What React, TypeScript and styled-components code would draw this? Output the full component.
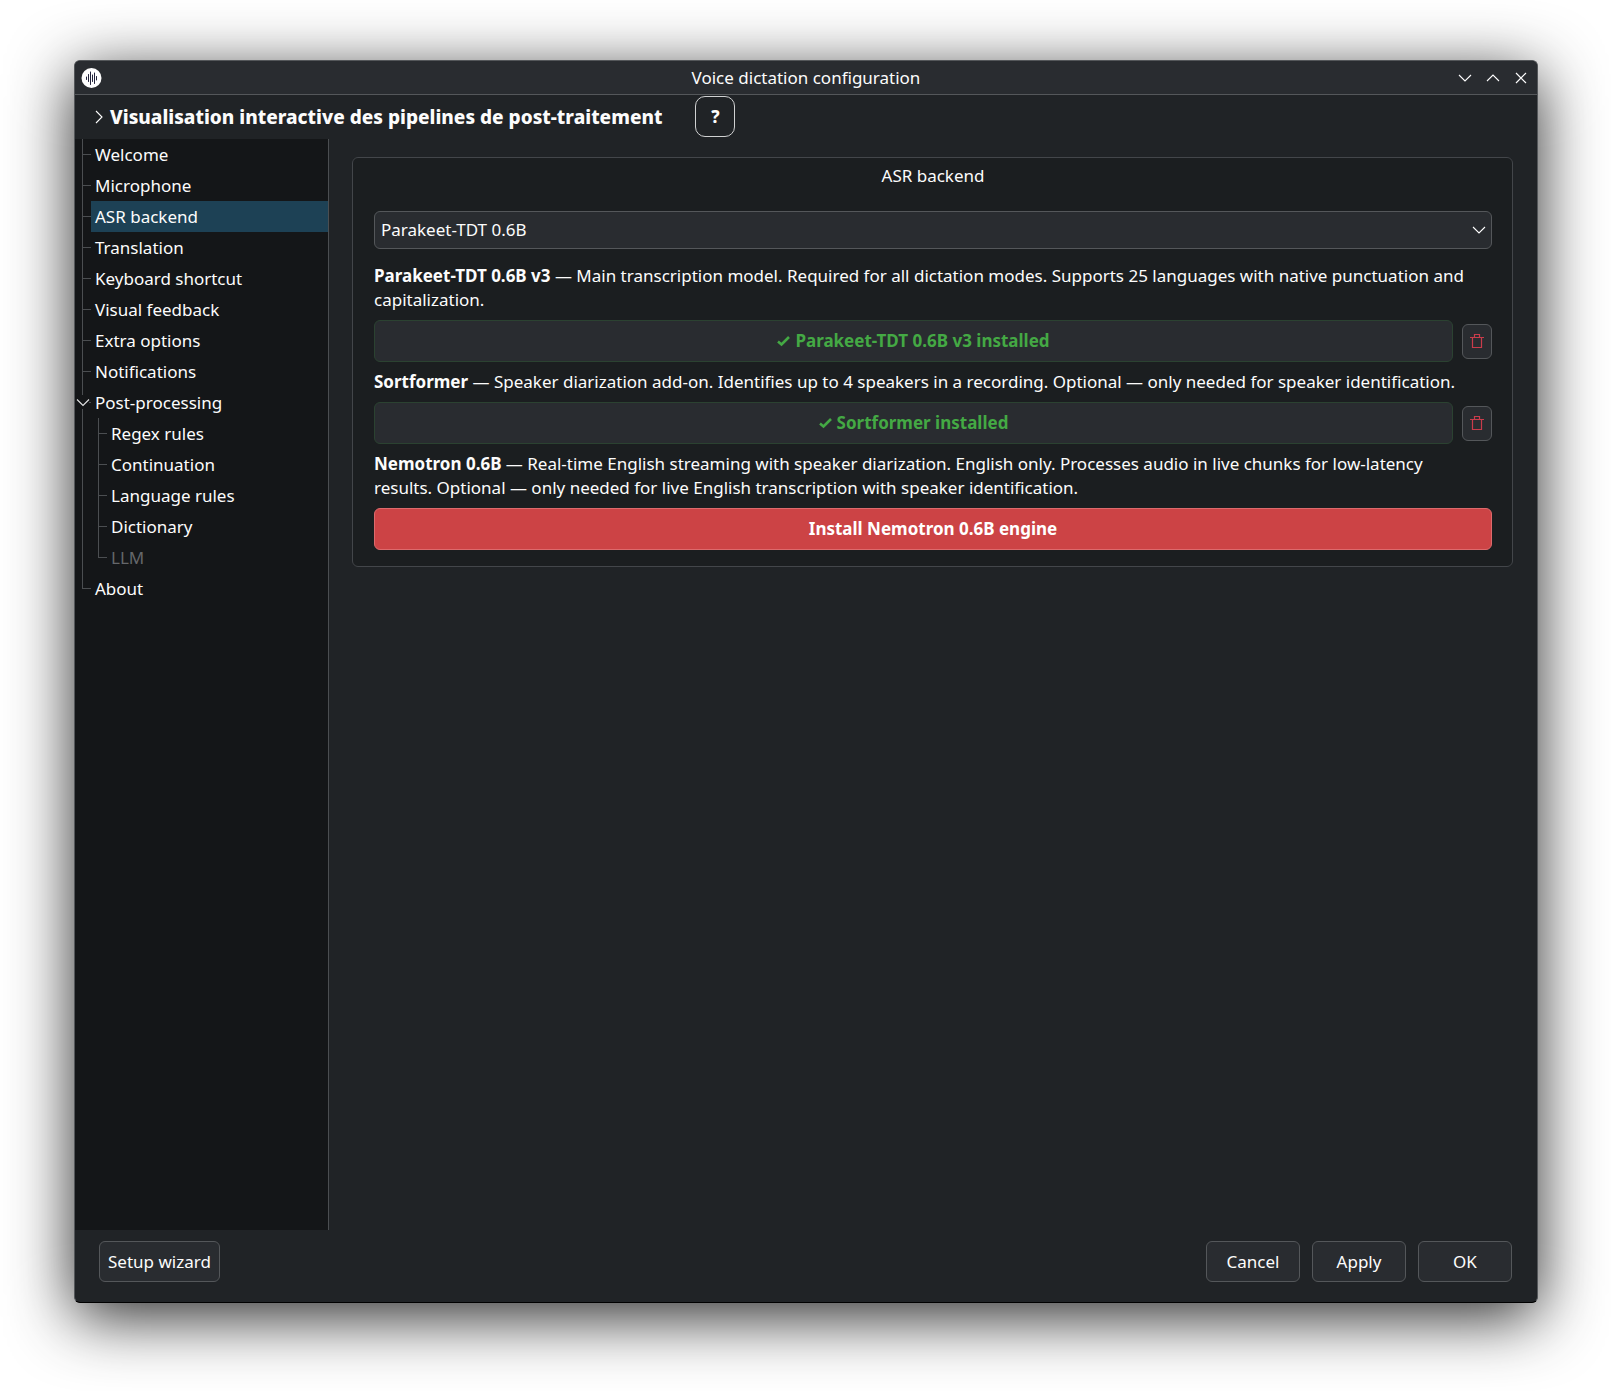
import React, { useState } from "react";
import styled, { createGlobalStyle, css } from "styled-components";

const GlobalStyle = createGlobalStyle`
  * { box-sizing: border-box; }
  body { margin: 0; background: #fff; }
  body, button, select { font-family: "Noto Sans", "Open Sans", sans-serif; font-size: 17px; line-height: 24px; color: #fcfcfc; }
`;

const Desktop = styled.div`
  display: flex;
  min-height: 100vh;
  padding: 60px 73px 88px 74px;
`;

const Window = styled.main`
  flex: 1;
  min-width: 0;
  display: flex;
  flex-direction: column;
  background: #202326;
  border: 1px solid #54575a;
  border-bottom-color: #000;
  border-radius: 6px;
  overflow: hidden;
  box-shadow: 0 14px 64px rgba(0, 0, 0, 0.84);
`;

const TitleBar = styled.header`
  display: grid;
  grid-template-columns: 1fr auto 1fr;
  align-items: center;
  height: 34px;
  padding: 0 6px;
  background: #292c30;
  border-bottom: 1px solid #54575a;
`;

const WindowTitle = styled.span`
  color: #fcfcfc;
`;

const WindowControls = styled.div`
  display: flex;
  justify-content: flex-end;
  gap: 8px;
`;

const IconButton = styled.button`
  display: flex;
  align-items: center;
  justify-content: center;
  width: 20px;
  height: 20px;
  padding: 0;
  border: 0;
  background: none;
`;

const HeaderRow = styled.div`
  display: flex;
  align-items: center;
  height: 44px;
  padding: 0 0 1px 17px;
`;

const Disclosure = styled.button`
  display: flex;
  align-items: center;
  gap: 4px;
  padding: 0;
  border: 0;
  background: none;
  font-size: 19px;
  font-weight: 800;
  white-space: nowrap;
`;

const HelpButton = styled.button`
  width: 40px;
  height: 41px;
  margin-left: 33px;
  padding: 0;
  border: 1px solid #d0d1d2;
  border-radius: 10px;
  background: none;
  font-weight: 800;
`;

const Body = styled.div`
  flex: 1;
  display: flex;
`;

const Sidebar = styled.nav`
  width: 254px;
  flex: none;
  background: #141618;
  border-right: 1px solid #4b4e51;
`;

const TreeList = styled.ul`
  margin: 0;
  padding: 0;
  list-style: none;
`;

const TreeRow = styled.li`
  display: flex;
  height: 31px;
`;

const TreeButton = styled.button<{ $selected: boolean }>`
  flex: 1;
  padding: 0 0 0 4px;
  border: 0;
  background: ${(p) => (p.$selected ? "#1d4155" : "none")};
  text-align: left;
  &:disabled { color: #65676a; }
`;

const Guide = styled.svg`
  display: block;
  flex: none;
  width: 16px;
  height: 31px;
  fill: none;
  stroke: #4b4e51;
`;

const Content = styled.section`
  flex: 1;
  min-width: 0;
  padding: 18px 24px 18px 23px;
`;

const Group = styled.fieldset`
  display: flex;
  flex-direction: column;
  gap: 8px;
  min-width: 0;
  margin: 0;
  padding: 6px 20px 16px 21px;
  border: 1px solid #43464a;
  border-radius: 6px;
  background: #1b1e20;
`;

const GroupTitle = styled.div`
  margin-bottom: 15px;
  text-align: center;
`;

const SelectWrap = styled.div`
  display: grid;
  align-items: center;
  margin-bottom: 7px;
  & > * { grid-area: 1 / 1; }
  & > svg { justify-self: end; margin-right: 6px; pointer-events: none; }
`;

const frame = css`
  border: 1px solid #54575a;
  border-radius: 6px;
  background: #292c30;
`;

const Select = styled.select`
  ${frame}
  appearance: none;
  width: 100%;
  height: 38px;
  padding: 0 30px 0 6px;
`;

const Description = styled.p`
  margin: 0;
  padding-right: 8px;
`;

const EngineRow = styled.div`
  display: flex;
  align-items: center;
  gap: 9px;
`;

const EngineButton = styled.button<{ $kind: "installed" | "install" }>`
  ${frame}
  flex: 1;
  height: 42px;
  display: flex;
  align-items: center;
  justify-content: center;
  gap: 5px;
  font-weight: 700;
  ${(p) =>
    p.$kind === "installed"
      ? css`border-color: #2b4231; color: #44a944;`
      : css`border-color: #dd6a6c; background: #cc4345; color: #fff;`}
`;

const TrashButton = styled.button`
  ${frame}
  display: flex;
  align-items: center;
  justify-content: center;
  width: 30px;
  height: 35px;
  padding: 0;
`;

const Footer = styled.footer`
  display: flex;
  gap: 12px;
  height: 72px;
  padding: 11px 25px 20px 24px;
`;

const DialogButton = styled.button<{ $first?: boolean }>`
  ${frame}
  min-width: 94px;
  padding: 0 8px;
  margin-right: ${(p) => (p.$first ? "auto" : "0")};
`;

type GuideKind = "tee" | "end" | "pass" | "open";

const guidePaths: Record<GuideKind, string> = {
  tee: "M7.5 0V31M8 15.5H16",
  end: "M7.5 0V16M8 15.5H16",
  pass: "M7.5 0V31",
  open: "M7.5 0V8M7.5 22V31M14 15.5H16",
};

function TreeGuide({ kind }: { kind: GuideKind }) {
  return (
    <Guide viewBox="0 0 16 31" aria-hidden="true">
      <path d={guidePaths[kind]} />
      {kind === "open" && <path d="M2 12.5L8 18.5L14 12.5" stroke="#e4e5e6" strokeWidth="1.1" />}
    </Guide>
  );
}

function Chevron({ dir, color = "#fcfcfc" }: { dir: "down" | "up" | "right"; color?: string }) {
  const d = { down: "M1 4L7 10L13 4", up: "M1 10L7 4L13 10", right: "M4 1L10 7L4 13" }[dir];
  return (
    <svg width="14" height="14" viewBox="0 0 14 14" fill="none" stroke={color} strokeWidth="1.1" aria-hidden="true">
      <path d={d} />
    </svg>
  );
}

function AppLogo() {
  return (
    <svg width="21" height="20" viewBox="0 0 21 20" aria-hidden="true">
      <circle cx="10.5" cy="10" r="10" fill="#fff" />
      <path
        d="M5.5 9V11.5M7.5 6.5V13.5M9.5 4V16.5M11.5 7V13.5M13.5 5V15.5M15.5 8.5V12"
        stroke="#23243c"
        strokeWidth="1"
        strokeLinecap="round"
      />
    </svg>
  );
}

function TrashIcon() {
  return (
    <svg width="14" height="16" viewBox="0 0 14 16" fill="none" stroke="#c93c4b" strokeWidth="1.2" aria-hidden="true">
      <path d="M0 4.5H14M4.5 4.5V1.5H9.5V4.5M2.5 4.5V14.5H11.5V4.5" />
    </svg>
  );
}

function CheckIcon() {
  return (
    <svg width="13" height="12" viewBox="0 0 13 12" fill="none" stroke="#44a944" strokeWidth="2.6" aria-hidden="true">
      <path d="M1 6.5L4.5 9.5L12 2" />
    </svg>
  );
}

const pages: { name: string; guides: GuideKind[]; disabled?: boolean }[] = [
  { name: "Welcome", guides: ["tee"] },
  { name: "Microphone", guides: ["tee"] },
  { name: "ASR backend", guides: ["tee"] },
  { name: "Translation", guides: ["tee"] },
  { name: "Keyboard shortcut", guides: ["tee"] },
  { name: "Visual feedback", guides: ["tee"] },
  { name: "Extra options", guides: ["tee"] },
  { name: "Notifications", guides: ["tee"] },
  { name: "Post-processing", guides: ["open"] },
  { name: "Regex rules", guides: ["pass", "tee"] },
  { name: "Continuation", guides: ["pass", "tee"] },
  { name: "Language rules", guides: ["pass", "tee"] },
  { name: "Dictionary", guides: ["pass", "tee"] },
  { name: "LLM", guides: ["pass", "end"], disabled: true },
  { name: "About", guides: ["end"] },
];

function InstalledEngine({ name }: { name: string }) {
  return (
    <EngineRow>
      <EngineButton $kind="installed">
        <CheckIcon />
        {name} installed
      </EngineButton>
      <TrashButton aria-label={`Remove ${name}`}>
        <TrashIcon />
      </TrashButton>
    </EngineRow>
  );
}

export default function App() {
  const [page, setPage] = useState("ASR backend");
  return (
    <Desktop>
      <GlobalStyle />
      <Window>
        <TitleBar>
          <AppLogo />
          <WindowTitle>Voice dictation configuration</WindowTitle>
          <WindowControls>
            <IconButton aria-label="Minimize"><Chevron dir="down" /></IconButton>
            <IconButton aria-label="Maximize"><Chevron dir="up" /></IconButton>
            <IconButton aria-label="Close">
              <svg width="12" height="12" viewBox="0 0 12 12" stroke="#fcfcfc" strokeWidth="1.2" aria-hidden="true">
                <path d="M1 1L11 11M11 1L1 11" />
              </svg>
            </IconButton>
          </WindowControls>
        </TitleBar>
        <HeaderRow>
          <Disclosure aria-expanded={false}>
            <Chevron dir="right" />
            Visualisation interactive des pipelines de post-traitement
          </Disclosure>
          <HelpButton aria-label="Help">?</HelpButton>
        </HeaderRow>
        <Body>
          <Sidebar aria-label="Settings pages">
            <TreeList>
              {pages.map((p) => (
                <TreeRow key={p.name}>
                  {p.guides.map((g, i) => <TreeGuide key={i} kind={g} />)}
                  <TreeButton $selected={p.name === page} disabled={p.disabled} onClick={() => setPage(p.name)}>
                    {p.name}
                  </TreeButton>
                </TreeRow>
              ))}
            </TreeList>
          </Sidebar>
          <Content>
            <Group aria-labelledby="group-title">
              <GroupTitle id="group-title">ASR backend</GroupTitle>
              <SelectWrap>
                <Select aria-labelledby="group-title">
                  <option>Parakeet-TDT 0.6B</option>
                </Select>
                <Chevron dir="down" />
              </SelectWrap>
              <Description>
                <b>Parakeet-TDT 0.6B v3</b> — Main transcription model. Required for all dictation modes. Supports 25
                languages with native punctuation and capitalization.
              </Description>
              <InstalledEngine name="Parakeet-TDT 0.6B v3" />
              <Description>
                <b>Sortformer</b> — Speaker diarization add-on. Identifies up to 4 speakers in a recording. Optional —
                only needed for speaker identification.
              </Description>
              <InstalledEngine name="Sortformer" />
              <Description>
                <b>Nemotron 0.6B</b> — Real-time English streaming with speaker diarization. English only. Processes
                audio in live chunks for low-latency results. Optional — only needed for live English transcription with
                speaker identification.
              </Description>
              <EngineRow>
                <EngineButton $kind="install">Install Nemotron 0.6B engine</EngineButton>
              </EngineRow>
            </Group>
          </Content>
        </Body>
        <Footer>
          <DialogButton $first>Setup wizard</DialogButton>
          <DialogButton>Cancel</DialogButton>
          <DialogButton>Apply</DialogButton>
          <DialogButton>OK</DialogButton>
        </Footer>
      </Window>
    </Desktop>
  );
}
